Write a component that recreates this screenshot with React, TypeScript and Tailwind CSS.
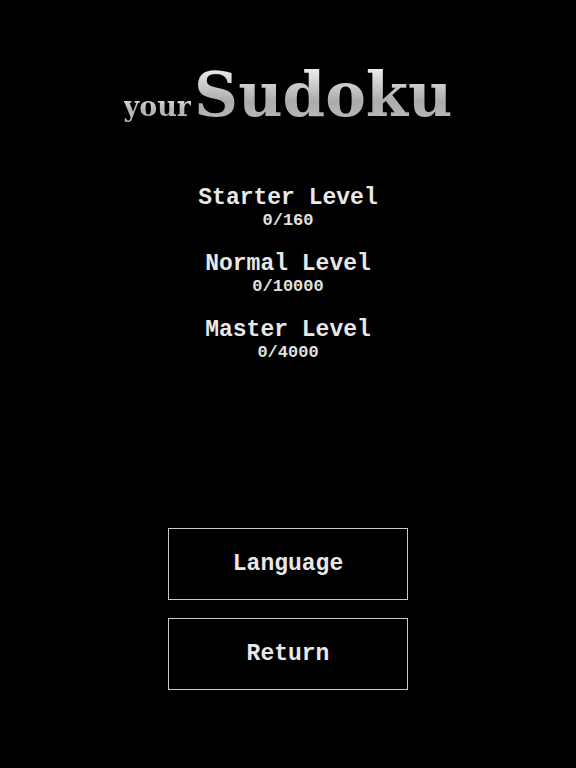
import React from "react";

const mono = { fontFamily: '"Liberation Mono", "Courier New", monospace' };
const slab = { fontFamily: '"DejaVu Serif", "Liberation Serif", serif' };

function Level({ name, count }: { name: string; count: string }) {
  return (
    <div className="flex flex-col items-center">
      <div className="text-[23px] leading-[24px] font-bold text-[#e8e8e8]">{name}</div>
      <div className="text-[17px] leading-[22px] font-bold text-[#e0e0e0]">{count}</div>
    </div>
  );
}

function Button({ label }: { label: string }) {
  return (
    <div className="w-[240px] h-[72px] border border-[#c8c8c8] flex items-center justify-center">
      <span className="text-[23px] font-bold text-[#e8e8e8] leading-none">{label}</span>
    </div>
  );
}

export default function App() {
  return (
    <div className="w-[576px] h-[768px] bg-black flex flex-col items-center pt-[64px]" style={mono}>
      <div className="flex items-baseline justify-center h-[70px] leading-none" style={slab}>
        <span className="text-[27px] font-bold pb-[8px] bg-gradient-to-b from-[#f0f0f0] via-[#b4b4b4] to-[#c8c8c8] bg-clip-text text-transparent mr-[3px]">
          your
        </span>
        <span className="text-[61px] font-bold pb-[14px] bg-gradient-to-b from-[#f6f6f6] via-[#acacac] to-[#c4c4c4] bg-clip-text text-transparent">
          Sudoku
        </span>
      </div>
      <div className="mt-[52px] flex flex-col gap-[20px]">
        <Level name="Starter Level" count="0/160" />
        <Level name="Normal Level" count="0/10000" />
        <Level name="Master Level" count="0/4000" />
      </div>
      <div className="mt-[164px] flex flex-col gap-[18px]">
        <Button label="Language" />
        <Button label="Return" />
      </div>
    </div>
  );
}
